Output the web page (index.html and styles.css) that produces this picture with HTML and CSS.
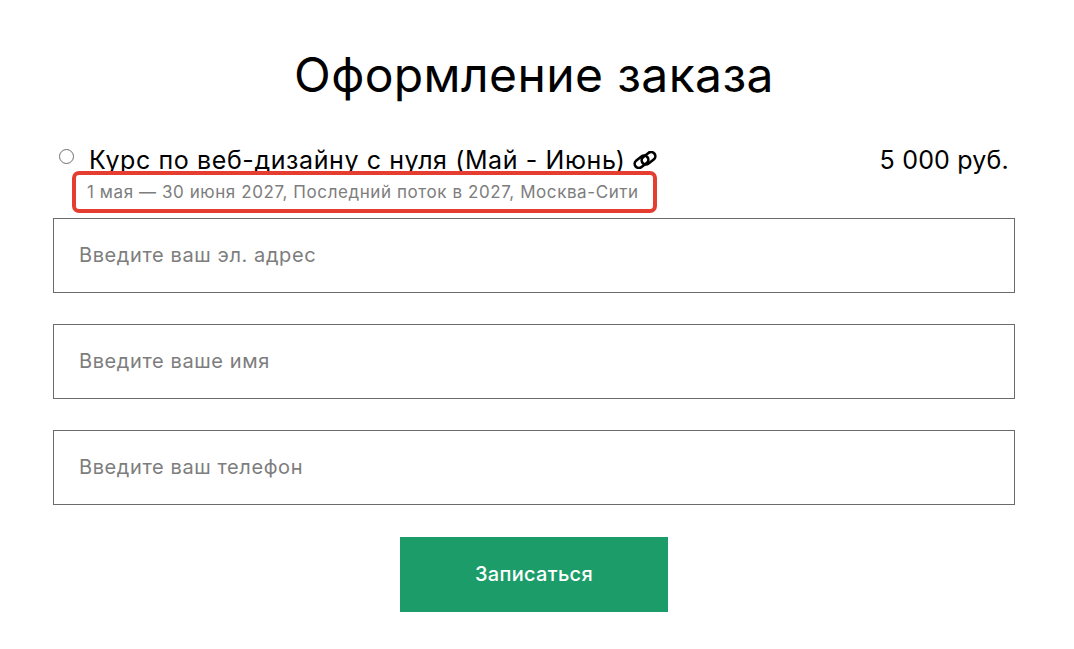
FILE: index.html
```html
<!DOCTYPE html>
<html lang="ru">
<head>
	<title>Оформление заказа</title>
	<meta charset="UTF-8">
	<link rel="stylesheet" href="styles.css">
</head>
<body>
	<form class="order">
		<h1 class="order-title">Оформление заказа</h1>

		<div class="course">
			<span class="course-radio"></span>
			<div class="course-info">
				<div class="course-name">
					Курс по веб-дизайну с нуля (Май - Июнь)
					<svg class="course-link" viewBox="0 0 24 18" width="24" height="18">
						<g fill="none" stroke="currentColor" stroke-width="2.600">
							<rect x="1" y="6.500" width="15" height="8.500" rx="4.250" transform="rotate(-38 8.500 10.750)"/>
							<rect x="8" y="3" width="15" height="8.500" rx="4.250" transform="rotate(-38 15.500 7.250)"/>
						</g>
					</svg>
				</div>
				<div class="course-meta">
					<span class="course-details">1 мая — 30 июня 2027, Последний поток в 2027, Москва-Сити</span>
				</div>
			</div>
			<div class="course-price">5 000 руб.</div>
		</div>

		<div class="fields">
			<input class="field" type="text" placeholder="Введите ваш эл. адрес">
			<input class="field" type="text" placeholder="Введите ваше имя">
			<input class="field" type="text" placeholder="Введите ваш телефон">
		</div>

		<div class="submit-row">
			<button class="submit" type="button">Записаться</button>
		</div>
	</form>
</body>
</html>
```

FILE: styles.css
```css
html {
	background: #fff;
}

body {
	margin: 0;
	font-family: 'Inter', 'Noto Sans', sans-serif;
	color: #000;
}

.order {
	width: 962px;
	margin: 0 0 0 53px;
	padding-top: 45px;
}

.order-title {
	margin: 0;
	font-size: 48px;
	line-height: 60px;
	font-weight: 400;
	letter-spacing: 0.4px;
	text-align: center;
}

.course {
	display: flex;
	align-items: flex-start;
	margin-top: 39px;
	padding: 0 6px;
}

.course-radio {
	flex: none;
	box-sizing: border-box;
	width: 15px;
	height: 15px;
	margin: 5px 15px 0 0;
	border: 1.5px solid #6f6f6f;
	border-radius: 50%;
}

.course-info {
	flex-grow: 1;
}

.course-name {
	display: flex;
	align-items: center;
	gap: 7px;
	font-size: 25px;
	line-height: 32px;
	letter-spacing: 0.6px;
	white-space: nowrap;
}

.course-link {
	flex: none;
}

.course-meta {
	margin-top: 6px;
}

.course-details {
	position: relative;
	margin-left: -2px;
	font-size: 17px;
	line-height: 20px;
	letter-spacing: 0.58px;
	color: #7d7d7d;
	white-space: nowrap;
}

/* annotation frame drawn over the details line */
.course-details::after {
	content: "";
	position: absolute;
	left: -15px;
	right: -18px;
	top: -11px;
	bottom: -11px;
	border: 4px solid #e53e31;
	border-radius: 7px;
}

.course-price {
	flex: none;
	font-size: 25px;
	line-height: 32px;
	letter-spacing: 0.2px;
}

.fields {
	display: flex;
	flex-direction: column;
	gap: 31px;
	margin-top: 16px;
}

.field {
	display: block;
	box-sizing: border-box;
	width: 100%;
	height: 75px;
	padding: 0 25px 1px;
	border: 1px solid #6b6b6b;
	border-radius: 0;
	background: #fff;
	font-family: inherit;
	font-size: 20px;
	letter-spacing: 0.6px;
	outline: none;
}

.field::placeholder {
	color: #7d7d7d;
	opacity: 1;
}

.submit-row {
	display: flex;
	justify-content: center;
	margin-top: 32px;
}

.submit {
	width: 268px;
	height: 75px;
	padding: 0 0 2px;
	border: none;
	border-radius: 0;
	background: #1b9c69;
	color: #fff;
	font-family: inherit;
	font-size: 20px;
	font-weight: 550;
	letter-spacing: 0.3px;
}
```
